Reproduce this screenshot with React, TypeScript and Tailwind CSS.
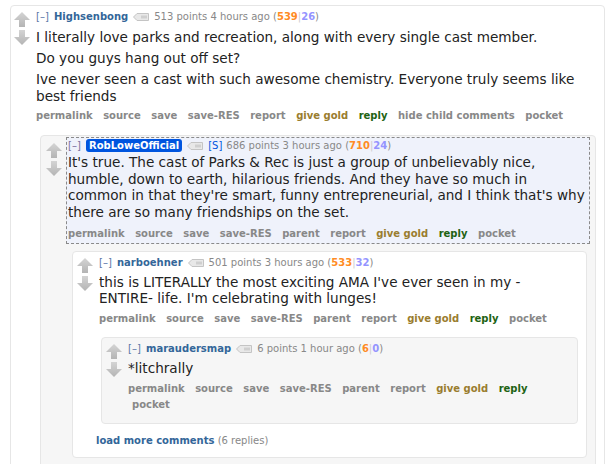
import React from "react";

const sans = { fontFamily: '"DejaVu Sans", Verdana, sans-serif' };

function Arrows() {
  return (
    <div className="flex flex-col items-center gap-[3px] w-[16px] shrink-0 pt-[6px]">
      <svg width="16" height="15" viewBox="0 0 16 15">
        <defs>
          <linearGradient id="ga" x1="0" y1="0" x2="0" y2="1">
            <stop offset="0" stopColor="#d4d4d4" />
            <stop offset="1" stopColor="#b4b4b4" />
          </linearGradient>
        </defs>
        <path d="M8 0 L16 8 L11 8 L11 15 L5 15 L5 8 L0 8 Z" fill="url(#ga)" />
      </svg>
      <svg width="16" height="15" viewBox="0 0 16 15">
        <path d="M8 15 L16 7 L11 7 L11 0 L5 0 L5 7 L0 7 Z" fill="url(#ga)" />
      </svg>
    </div>
  );
}

function TagIcon() {
  return (
    <svg width="16" height="8" viewBox="0 0 16 8" className="inline-block mx-[5px] align-[-1px]">
      <path d="M4 0.5 H15.5 V7.5 H4 L0.5 4 Z" fill="#e8e8e8" stroke="#c4c4c4" />
      <rect x="8" y="2.5" width="6" height="3" fill="#cfcfcf" />
    </svg>
  );
}

type Btn = { label: string; kind?: "gold" | "reply" };

function Buttons({ items, wrapAt }: { items: Btn[]; wrapAt?: number }) {
  return (
    <ul className="flex flex-wrap gap-x-[10.5px] text-[10px] font-bold leading-[16px] text-[#888]" style={sans}>
      {items.map((b, i) => (
        <React.Fragment key={b.label}>
          {wrapAt === i && <li className="basis-full h-0" />}
          <li
            className={
              b.kind === "gold"
                ? "text-[#9a7d2e]"
                : b.kind === "reply"
                ? "text-[#1e6312]"
                : wrapAt === i
                ? "pl-[4px]"
                : ""
            }
          >
            {b.label}
          </li>
        </React.Fragment>
      ))}
    </ul>
  );
}

function Tagline({
  name,
  points,
  ago,
  up,
  down,
  op,
}: {
  name: string;
  points: string;
  ago: string;
  up: string;
  down: string;
  op?: boolean;
}) {
  return (
    <p className="text-[10px] leading-[14px] h-[14px] text-[#888] whitespace-nowrap" style={sans}>
      <span className={op ? "text-[#7a6e9e]" : "text-[#5b76a8]"}>[–]</span>{" "}
      {op ? (
        <span className="ml-[2px] bg-[#0055df] text-white font-bold rounded-[3px] px-[3px] py-[1px]">{name}</span>
      ) : (
        <span className="ml-[2px] text-[#336699] font-bold">{name}</span>
      )}
      <TagIcon />
      {op && <span className="text-[#0055df] mr-[4px]">[S]</span>}
      {points} {ago} (<span className="text-[#ff8b24] font-bold">{up}</span>
      <span className="text-[#ccc]">|</span>
      <span className="text-[#9494ff] font-bold">{down}</span>)
    </p>
  );
}

const baseBtns: Btn[] = [
  { label: "permalink" },
  { label: "source" },
  { label: "save" },
  { label: "save-RES" },
  { label: "parent" },
  { label: "report" },
  { label: "give gold", kind: "gold" },
  { label: "reply", kind: "reply" },
  { label: "pocket" },
];

export default function App() {
  return (
    <div className="w-[611px] h-[464px] overflow-hidden bg-white pt-[5px] pl-[10px] pr-[6px]" style={sans}>
      {/* level 1 */}
      <div className="border border-[#e6e6e6] rounded-[4px] bg-white pb-[40px]">
        <div className="flex pl-[3px]">
          <Arrows />
          <div className="pl-[6px] pt-[4px]">
            <Tagline name="Highsenbong" points="513 points" ago="4 hours ago" up="539" down="26" />
            <div className="text-[13.6px] leading-[17px] text-[#222] mt-[5px] space-y-[4px] whitespace-nowrap">
              <p>I literally love parks and recreation, along with every single cast member.</p>
              <p>Do you guys hang out off set?</p>
              <p>
                Ive never seen a cast with such awesome chemistry. Everyone truly seems like
                <br />
                best friends
              </p>
            </div>
            <div className="mt-[3px]">
              <Buttons
                items={[
                  { label: "permalink" },
                  { label: "source" },
                  { label: "save" },
                  { label: "save-RES" },
                  { label: "report" },
                  { label: "give gold", kind: "gold" },
                  { label: "reply", kind: "reply" },
                  { label: "hide child comments" },
                  { label: "pocket" },
                ]}
              />
            </div>
          </div>
        </div>

        {/* level 2 */}
        <div className="ml-[29px] mr-[8px] mt-[11px] border border-[#e6e6e6] rounded-[4px] bg-[#f6f6f6] pt-[1px] pr-[5px] pb-[40px]">
          <div className="flex">
            <div className="pl-[5px] pr-[4px]">
              <Arrows />
            </div>
            <div className="flex-1 border border-dashed border-[#8a8a8a] bg-[#eff2fb] pl-[1px] pt-[1px] pb-[1px]">
              <Tagline op name="RobLoweOfficial" points="686 points" ago="3 hours ago" up="710" down="24" />
              <div className="text-[13.6px] leading-[16.7px] text-[#222] mt-[1px] whitespace-nowrap">
                <p>
                  It's true. The cast of Parks &amp; Rec is just a group of unbelievably nice,
                  <br />
                  humble, down to earth, hilarious friends. And they have so much in
                  <br />
                  common in that they're smart, funny entrepreneurial, and I think that's why
                  <br />
                  there are so many friendships on the set.
                </p>
              </div>
              <div className="mt-[5px]">
                <Buttons items={baseBtns} />
              </div>
            </div>
          </div>

          {/* level 3 */}
          <div className="ml-[31px] mr-[3px] mt-[7px] border border-[#e6e6e6] rounded-[4px] bg-white pb-[9px]">
            <div className="flex pl-[4px]">
              <Arrows />
              <div className="pl-[6px] pt-[4px]">
                <Tagline name="narboehner" points="501 points" ago="3 hours ago" up="533" down="32" />
                <div className="text-[13.6px] leading-[16px] text-[#222] mt-[4px] whitespace-nowrap">
                  <p>
                    this is LITERALLY the most exciting AMA I've ever seen in my -
                    <br />
                    ENTIRE- life. I'm celebrating with lunges!
                  </p>
                </div>
                <div className="mt-[5px]">
                  <Buttons items={baseBtns} />
                </div>
              </div>
            </div>

            {/* level 4 */}
            <div className="ml-[28px] mr-[8px] mt-[10px] border border-[#e6e6e6] rounded-[4px] bg-[#f6f6f6] pb-[10px]">
              <div className="flex pl-[4px]">
                <Arrows />
                <div className="pl-[6px] pt-[4px]">
                  <Tagline name="maraudersmap" points="6 points" ago="1 hour ago" up="6" down="0" />
                  <div className="text-[13.6px] leading-[16px] text-[#222] mt-[4px]">
                    <p>*litchrally</p>
                  </div>
                  <div className="mt-[5px]">
                    <Buttons items={baseBtns} wrapAt={8} />
                  </div>
                </div>
              </div>
            </div>

            <p className="mt-[10px] ml-[23px] text-[10px] leading-[14px] text-[#888]">
              <span className="text-[#336699] font-bold">load more comments</span> (6 replies)
            </p>
          </div>
        </div>
      </div>
    </div>
  );
}
